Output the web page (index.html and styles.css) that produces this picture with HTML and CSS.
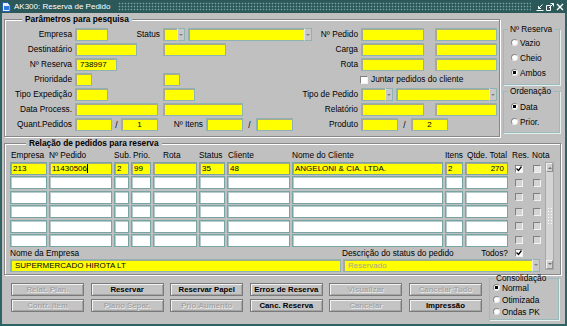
FILE: index.html
```html
<!DOCTYPE html>
<html lang="pt-BR">
<head>
    <meta charset="UTF-8">
    <meta name="viewport" content="width=device-width, initial-scale=1.0">
    <title>AK300: Reserva de Pedido</title>
    <link rel="stylesheet" href="styles.css">
</head>
<body>
<div class="win">
    <div class="titlebar">
        <svg class="app-icon" width="9" height="10" viewBox="0 0 9 10">
            <path d="M0.5 0.5h5l2.5 2.5v6.5h-7.5z" fill="#e8f0ff" stroke="#2060b8"/>
            <rect x="2" y="4" width="5" height="4" fill="#2f7ad6"/>
        </svg>
        <span class="title">AK300: Reserva de Pedido</span>
        <span class="pattern"></span>
        <span class="wbtns">
            <svg width="8" height="8" viewBox="0 0 8 8"><path d="M6.5 1.5L2.5 5.5M2.5 3v2.5h2.5M0.5 7.5h7" stroke="#fff" fill="none"/></svg>
            <svg width="8" height="8" viewBox="0 0 8 8"><path d="M0.5 2.5h4v5h-4zM3 5l4.5-4.5M4.5 0.5h3v3" stroke="#fff" fill="none"/></svg>
            <svg width="8" height="8" viewBox="0 0 8 8"><path d="M1 1l6 6M7 1l-6 6" stroke="#fff" stroke-width="1.4"/></svg>
        </span>
    </div>

    <div class="client">
        <div class="top">
            <fieldset class="frame params">
                <legend>Parâmetros para pesquisa</legend>
                <div class="prow">
                    <span class="lbl">Empresa</span>
                    <div class="cell"><span class="fld w33"></span><span class="lbl push">Status</span></div>
                    <div class="cell">
                        <span class="combo w22"><span class="fld"></span><span class="drop"></span></span>
                        <span class="combo w124 ml3"><span class="fld"></span><span class="drop"></span></span>
                        <span class="lbl push">Nº Pedido</span>
                    </div>
                    <div class="cell"><span class="fld w63"></span><span class="fld w62 ml11"></span></div>
                </div>
                <div class="prow">
                    <span class="lbl">Destinatário</span>
                    <div class="cell"><span class="fld w62"></span></div>
                    <div class="cell"><span class="fld w63"></span><span class="lbl push">Carga</span></div>
                    <div class="cell"><span class="fld w63"></span><span class="fld w62 ml11"></span></div>
                </div>
                <div class="prow">
                    <span class="lbl">Nº Reserva</span>
                    <div class="cell"><span class="fld w42 val">738997</span></div>
                    <div class="cell"><span class="lbl push">Rota</span></div>
                    <div class="cell"><span class="fld w63"></span><span class="fld w62 ml11"></span></div>
                </div>
                <div class="prow">
                    <span class="lbl">Prioridade</span>
                    <div class="cell"><span class="fld w17"></span></div>
                    <div class="cell"><span class="fld w17"></span></div>
                    <div class="cell"><span class="chk white first"></span><span class="lbl">Juntar pedidos do cliente</span></div>
                </div>
                <div class="prow">
                    <span class="lbl">Tipo Expedição</span>
                    <div class="cell"><span class="fld w33"></span></div>
                    <div class="cell"><span class="fld w32"></span><span class="lbl push">Tipo de Pedido</span></div>
                    <div class="cell">
                        <span class="combo w32"><span class="fld"></span><span class="drop"></span></span>
                        <span class="combo w101 ml3"><span class="fld"></span><span class="drop"></span></span>
                    </div>
                </div>
                <div class="prow">
                    <span class="lbl">Data Process.</span>
                    <div class="cell"><span class="fld w83"></span></div>
                    <div class="cell"><span class="fld w80"></span><span class="lbl push">Relatório</span></div>
                    <div class="cell"><span class="fld w63"></span><span class="fld w62 ml11"></span></div>
                </div>
                <div class="prow">
                    <span class="lbl">Quant.Pedidos</span>
                    <div class="cell"><span class="fld w37"></span><span class="slash s9">/</span><span class="fld w37 mid">1</span></div>
                    <div class="cell">
                        <span class="lbl w40 right">Nº Itens</span>
                        <span class="fld w37 ml3"></span><span class="slash s13">/</span><span class="fld w37"></span>
                        <span class="lbl push">Produto</span>
                    </div>
                    <div class="cell"><span class="fld w37"></span><span class="slash s13">/</span><span class="fld w37 mid">2</span></div>
                </div>
            </fieldset>

            <div class="side">
                <fieldset class="rgroup reserva">
                    <legend>Nº Reserva</legend>
                    <div class="radio"><i></i>Vazio</div>
                    <div class="radio"><i></i>Cheio</div>
                    <div class="radio on"><i></i>Ambos</div>
                </fieldset>
                <fieldset class="rgroup ordem">
                    <legend>Ordenação</legend>
                    <div class="radio on"><i></i>Data</div>
                    <div class="radio"><i></i>Prior.</div>
                </fieldset>
            </div>
        </div>

        <fieldset class="frame list">
            <legend>Relação de pedidos para reserva</legend>
            <div class="lgrid lhead">
                <span class="h1">Empresa</span>
                <span>Nº Pedido</span>
                <span>Sub.</span>
                <span class="h2">Prio.</span>
                <span class="hrota">Rota</span>
                <span>Status</span>
                <span class="h1">Cliente</span>
                <span>Nome do Cliente</span>
                <span>Itens</span>
                <span class="h2">Qtde. Total</span>
                <span class="h2">Res.</span>
                <span class="h2">Nota</span>
            </div>
            <div class="lbody">
                <div class="lmain">
                    <div class="lgrid rows">
                        <span class="c y">213</span><span class="c y">11430506<span class="caret"></span></span><span class="c y">2</span><span class="c y">99</span><span class="c y"></span><span class="c y">35</span><span class="c y">48</span><span class="c y">ANGELONI &amp; CIA. LTDA.</span><span class="c y">2</span><span class="c y num">270</span><span class="cbc"><span class="chk white"><svg width="6" height="6" viewBox="0 0 6 6"><path d="M0.5 2.5l2 2 3-4" stroke="#000" stroke-width="1.3" fill="none"/></svg></span></span><span class="cbc"><span class="chk light"></span></span>

                        <span class="c"></span><span class="c"></span><span class="c"></span><span class="c"></span><span class="c"></span><span class="c"></span><span class="c"></span><span class="c"></span><span class="c"></span><span class="c"></span><span class="cbc"><span class="chk"></span></span><span class="cbc"><span class="chk"></span></span>

                        <span class="c"></span><span class="c"></span><span class="c"></span><span class="c"></span><span class="c"></span><span class="c"></span><span class="c"></span><span class="c"></span><span class="c"></span><span class="c"></span><span class="cbc"><span class="chk"></span></span><span class="cbc"><span class="chk"></span></span>

                        <span class="c"></span><span class="c"></span><span class="c"></span><span class="c"></span><span class="c"></span><span class="c"></span><span class="c"></span><span class="c"></span><span class="c"></span><span class="c"></span><span class="cbc"><span class="chk"></span></span><span class="cbc"><span class="chk"></span></span>

                        <span class="c"></span><span class="c"></span><span class="c"></span><span class="c"></span><span class="c"></span><span class="c"></span><span class="c"></span><span class="c"></span><span class="c"></span><span class="c"></span><span class="cbc"><span class="chk"></span></span><span class="cbc"><span class="chk"></span></span>

                        <span class="c"></span><span class="c"></span><span class="c"></span><span class="c"></span><span class="c"></span><span class="c"></span><span class="c"></span><span class="c"></span><span class="c"></span><span class="c"></span><span class="cbc"><span class="chk"></span></span><span class="cbc"><span class="chk"></span></span>
                    </div>
                    <div class="nlabels">
                        <span class="n1">Nome da Empresa</span>
                        <span class="n2">Descrição do status do pedido</span>
                        <span>Todos?</span>
                        <span class="chk white todos"><svg width="6" height="6" viewBox="0 0 6 6"><path d="M0.5 2.5l2 2 3-4" stroke="#000" stroke-width="1.3" fill="none"/></svg></span>
                    </div>
                    <div class="nfields">
                        <span class="fld w331 val">SUPERMERCADO HIROTA LT</span>
                        <span class="combo w197 ml2 off"><span class="fld val">Reservado</span><span class="drop"></span></span>
                    </div>
                </div>
                <div class="vscroll">
                    <span class="sarrow up"></span>
                    <span class="strack"><span class="grip"></span></span>
                    <span class="sarrow down"></span>
                </div>
            </div>
        </fieldset>

        <div class="bottom">
            <div class="btns">
                <span class="btn off">Relat. Plan.</span>
                <span class="btn">Reservar</span>
                <span class="btn">Reservar Papel</span>
                <span class="btn">Erros de Reserva</span>
                <span class="btn off">Visualizar</span>
                <span class="btn off">Cancelar Tudo</span>
                <span class="btn off">Contr. Item</span>
                <span class="btn off">Plano Separ.</span>
                <span class="btn off">Prio.Aumento</span>
                <span class="btn">Canc. Reserva</span>
                <span class="btn off">Cancelar</span>
                <span class="btn">Impressão</span>
            </div>
            <fieldset class="rgroup consol">
                <legend>Consolidação</legend>
                <div class="radio on"><i></i>Normal</div>
                <div class="radio"><i></i>Otimizada</div>
                <div class="radio"><i></i>Ondas PK</div>
            </fieldset>
        </div>
    </div>
</div>
</body>
</html>
```

FILE: styles.css
```css
*{
    margin: 0;
    padding: 0;
    box-sizing: border-box;
}
body{
    font-family: "Liberation Sans", Arial, sans-serif;
    font-size: 8.3px;
    color: #000;
    background: #c0c0c0;
}
.win{
    width: 567px;
    height: 326px;
    display: flex;
    flex-direction: column;
    background: #c0c0c0;
}

/* barra de titulo */
.titlebar{
    height: 13px;
    display: flex;
    align-items: center;
    background: #2b5858;
    color: #fff;
    font-size: 8px;
    padding-left: 2px;
}
.app-icon{
    margin-right: 3px;
}
.title{
    white-space: nowrap;
}
.pattern{
    flex: 1;
    height: 9px;
    margin: 0 5px 0 7px;
    background-image: radial-gradient(circle, #7aa4a4 0.7px, transparent 1.1px);
    background-size: 3px 3px;
}
.wbtns{
    display: flex;
    gap: 2px;
    padding-right: 3px;
}

.client{
    flex: 1;
    border: 2px solid #2f6262;
    border-top: 0;
    padding: 0 2px;
}
.top{
    display: flex;
    align-items: flex-start;
}

/* quadros */
fieldset{
    border: 1px solid #888;
    min-width: 0;
}
legend{
    white-space: nowrap;
}
.frame{
    box-shadow: inset 1px 1px 0 #fff, 1px 1px 0 #fff;
}
.frame > legend{
    font-weight: bold;
    line-height: 13px;
    padding: 0 3px;
    background: #c0c0c0;
}
.params{
    width: 496px;
    padding: 2px 2px 5px 0;
}
.params > legend{
    margin-left: 17px;
}
.prow{
    display: grid;
    grid-template-columns: 67px 85px 195px 136px;
    column-gap: 3px;
    height: 13px;
    margin-bottom: 2px;
}
.prow:last-child{
    margin-bottom: 0;
}
.cell{
    display: flex;
    align-items: center;
}
.lbl{
    line-height: 13px;
    white-space: nowrap;
}
.prow > .lbl, .right{
    text-align: right;
}
.push{
    margin-left: auto;
}
.slash{
    text-align: center;
}
.s9{ width: 9px; }
.s13{ width: 13px; }

/* campos */
.fld{
    display: block;
    height: 13px;
    background: #ff0;
    border: 1px solid #8fb2b2;
    box-shadow: inset 1px 1px 0 #a9a98a;
    line-height: 11px;
    font-size: 8px;
    white-space: nowrap;
    overflow: hidden;
}
.val{
    padding-left: 4px;
}
.mid{
    text-align: center;
}
.combo{
    display: flex;
    height: 13px;
}
.combo .fld{
    flex: 1;
    border-right: 0;
}
.drop{
    width: 8px;
    height: 13px;
    background: #c8c8c8;
    border: 1px solid #8fb2b2;
    border-left: 1px solid #e8e8e8;
    display: flex;
    align-items: center;
    justify-content: center;
}
.drop::after{
    content: "";
    border: 2px solid transparent;
    border-top: 2px solid #808080;
    margin-top: 2px;
}
.combo.off .fld{
    color: #a4a490;
}
.w17{ width: 17px; }
.w22{ width: 22px; }
.w32{ width: 32px; }
.w33{ width: 33px; }
.w37{ width: 37px; }
.w40{ width: 40px; }
.w42{ width: 42px; }
.w62{ width: 62px; }
.w63{ width: 63px; }
.w80{ width: 80px; }
.w83{ width: 83px; }
.w101{ width: 101px; }
.w124{ width: 124px; }
.w197{ width: 197px; }
.w331{ width: 331px; }
.ml2{ margin-left: 2px; }
.ml3{ margin-left: 3px; }
.ml11{ margin-left: 11px; }

/* caixas de verificacao */
.chk{
    display: inline-flex;
    align-items: center;
    justify-content: center;
    width: 8px;
    height: 8px;
    flex: none;
    border: 1px solid;
    border-color: #808080 #f2f2f2 #f2f2f2 #808080;
    background: #d4d4d4;
}
.chk.white{
    background: #fff;
}
.chk.light{
    background: #e6e6e6;
}
.chk.first{
    margin: 0 3px 0 -1px;
}

/* grupos de radio */
.side{
    width: 57px;
    margin: 11px 0 0 3px;
}
.rgroup{
    border: 1px solid #98bcbc;
    box-shadow: 1px 1px 0 #e4f0f0;
}
.rgroup > legend{
    line-height: 10px;
    padding: 0 2px;
    margin-left: -3px;
}
.reserva{
    padding: 1px 0 4px 7px;
}
.ordem{
    margin-top: 1px;
    padding: 3px 0 3px 7px;
}
.radio{
    display: flex;
    align-items: center;
    height: 15px;
    white-space: nowrap;
}
.radio i{
    width: 7px;
    height: 7px;
    border-radius: 50%;
    background: #fff;
    border: 1px solid;
    border-color: #8a8a8a #e8e8e8 #e8e8e8 #8a8a8a;
    margin-right: 2px;
}
.radio.on i{
    background: radial-gradient(circle, #000 1.4px, #fff 2px);
}

/* lista de pedidos */
.list{
    width: 557px;
    padding: 0 6px 2px 5px;
}
.list > legend{
    margin-left: 16px;
}
.lgrid{
    display: grid;
    grid-template-columns: 37px 63px 15px 20px 44px 26px 63px 151px 18px 43px 18px 14px;
    column-gap: 2px;
}
.lhead{
    height: 11px;
    line-height: 11px;
    margin-bottom: 1px;
    white-space: nowrap;
}
.lhead .h1{ padding-left: 1px; }
.lhead .h2{ padding-left: 2px; }
.lhead .hrota{ padding-left: 10px; }
.lbody{
    display: flex;
    gap: 1px;
}
.lmain{
    width: 534px;
}
.rows{
    grid-auto-rows: 13px;
    row-gap: 1.4px;
}
.c{
    background: #fff;
    border: 1px solid #78a4a4;
    box-shadow: inset 1px 1px 0 #b4cccc;
    line-height: 11px;
    font-size: 8px;
    padding-left: 2px;
    white-space: nowrap;
    overflow: hidden;
}
.c.y{
    background: #ff0;
    box-shadow: inset 1px 1px 0 #a9a98a;
}
.c.num{
    text-align: right;
    padding-right: 3px;
}
.caret{
    display: inline-block;
    width: 1px;
    height: 9px;
    background: #000;
    vertical-align: -2px;
}
.cbc{
    display: flex;
    align-items: center;
    justify-content: center;
}
.nlabels{
    display: flex;
    align-items: center;
    height: 11px;
    margin-top: 1px;
    white-space: nowrap;
}
.nlabels .n1{
    width: 332px;
}
.nlabels .n2{
    flex: 1;
}
.chk.todos{
    margin: 0 21px 0 7px;
}
.nfields{
    display: flex;
}
.vscroll{
    width: 9px;
    display: flex;
    flex-direction: column;
    margin-bottom: 2px;
    border: 1px solid #a8a8a8;
    background: #d4d4d4;
}
.sarrow{
    height: 9px;
    display: flex;
    align-items: center;
    justify-content: center;
    background: #cfcfcf;
    border: 1px solid;
    border-color: #f0f0f0 #909090 #909090 #f0f0f0;
}
.sarrow.up::after{
    content: "";
    border: 2px solid transparent;
    border-bottom: 2px solid #707070;
    margin-top: -2px;
}
.sarrow.down::after{
    content: "";
    border: 2px solid transparent;
    border-top: 2px solid #707070;
    margin-top: 2px;
}
.strack{
    flex: 1;
    display: flex;
    align-items: center;
    justify-content: center;
}
.grip{
    width: 5px;
    height: 18px;
    background-image: radial-gradient(circle, #fff 0.7px, transparent 1px);
    background-size: 3px 3px;
}

/* botoes */
.bottom{
    display: flex;
    align-items: flex-start;
}
.btns{
    display: grid;
    grid-template-columns: repeat(6, 73px);
    column-gap: 6.6px;
    row-gap: 3px;
    margin: 8px 0 0 7px;
}
.btn{
    height: 13px;
    border: 1px solid #7a7a7a;
    box-shadow: inset 1px 1px 0 #f2f2f2, inset -1px -1px 0 #a4a4a4;
    background: #c4c4c4;
    font-weight: bold;
    font-size: 7.8px;
    line-height: 11px;
    text-align: center;
    white-space: nowrap;
}
.btn.off{
    color: #a6a6a6;
    text-shadow: 0.6px 0.6px 0 #ececec;
}
.consol{
    width: 70px;
    margin: -1px 4px 0 auto;
    padding: 0 0 1px 3px;
}
.consol > legend{
    line-height: 9px;
    margin-left: 1px;
}
.consol .radio{
    height: 12px;
}
.consol .radio:first-of-type{
    margin-top: -1px;
}
```
